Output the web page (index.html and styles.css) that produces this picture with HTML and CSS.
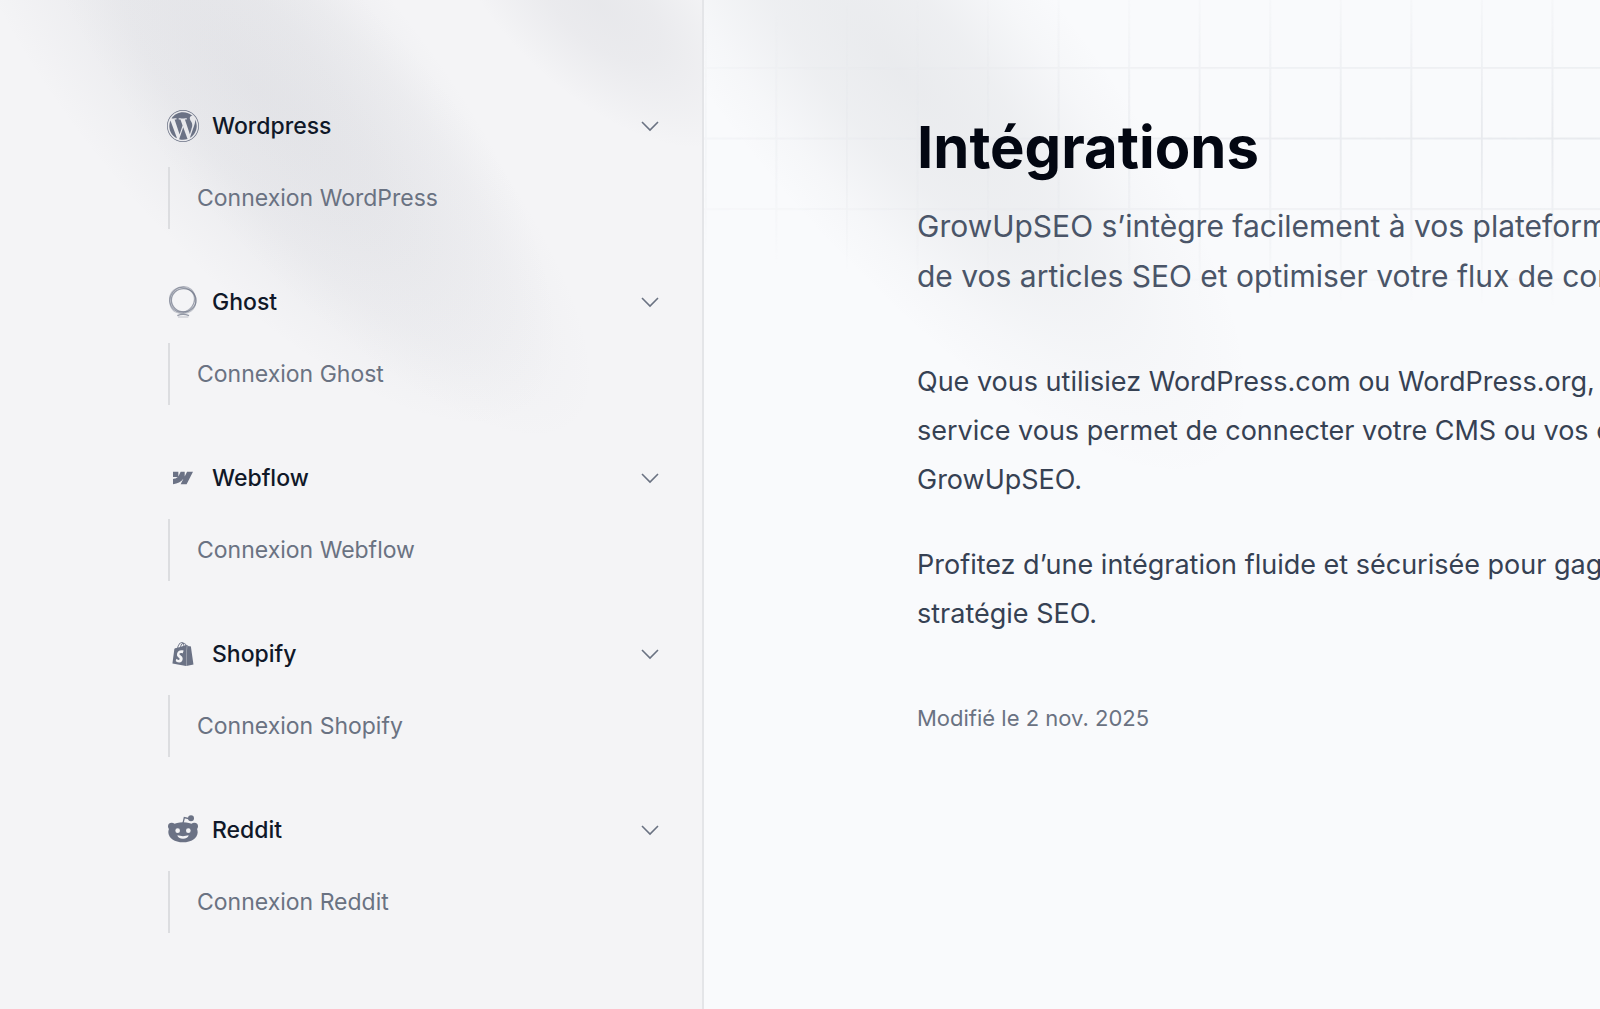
FILE: index.html
```html
<!DOCTYPE html>
<html lang="fr">
  <head>
    <meta charset="UTF-8" />
    <meta name="viewport" content="width=device-width, initial-scale=1.0" />
    <title>Intégrations - GrowUpSEO</title>
    <link rel="stylesheet" href="styles.css">
  </head>
  <body>
    <div class="layout">
      <aside class="sidebar">
        <!-- Halos du fond -->
        <svg class="backdrop" width="704" height="560" viewBox="0 0 704 560" aria-hidden="true">
          <defs>
            <radialGradient id="halo">
              <stop offset="0" stop-color="#6b7080" stop-opacity="0.09" />
              <stop offset="0.4" stop-color="#6b7080" stop-opacity="0.07" />
              <stop offset="0.75" stop-color="#6b7080" stop-opacity="0.03" />
              <stop offset="1" stop-color="#6b7080" stop-opacity="0" />
            </radialGradient>
            <radialGradient id="halo-soft">
              <stop offset="0" stop-color="#7c8090" stop-opacity="0.05" />
              <stop offset="0.7" stop-color="#7c8090" stop-opacity="0.03" />
              <stop offset="1" stop-color="#7c8090" stop-opacity="0" />
            </radialGradient>
          </defs>
          <ellipse cx="250" cy="85" rx="430" ry="165" transform="rotate(49 250 85)" fill="url(#halo)" />
          <ellipse cx="310" cy="130" rx="400" ry="130" transform="rotate(48 310 130)" fill="url(#halo-soft)" />
          <ellipse cx="600" cy="5" rx="190" ry="90" transform="rotate(42 600 5)" fill="url(#halo)" />
        </svg>

        <nav class="menu">
          <section class="menu-group">
            <button class="menu-title" type="button" aria-expanded="true">
              <span class="menu-icon">
                <svg width="32" height="32" viewBox="8 8 496 496" fill="currentColor" aria-hidden="true">
                  <path d="M61.7 169.4l101.5 278C92.2 413 43.3 340.2 43.3 256c0-30.9 6.6-60.1 18.4-86.6zm337.9 75.9c0-26.3-9.4-44.5-17.5-58.7-10.8-17.5-20.9-32.4-20.9-49.9 0-19.6 14.8-37.8 35.7-37.8.9 0 1.8.1 2.8.2-37.9-34.7-88.3-55.9-143.7-55.9-74.3 0-139.7 38.1-177.8 95.9 5 .2 9.7.3 13.7.3 22.2 0 56.7-2.7 56.7-2.7 11.5-.7 12.8 16.2 1.4 17.5 0 0-11.5 1.3-24.3 2l77.5 230.4L249.8 247l-33.1-90.8c-11.5-.7-22.3-2-22.3-2-11.5-.7-10.1-18.2 1.3-17.5 0 0 35.1 2.7 56 2.7 22.2 0 56.7-2.7 56.7-2.7 11.5-.7 12.8 16.2 1.4 17.5 0 0-11.5 1.3-24.3 2l76.9 228.7 21.2-70.9c9-29.4 16-50.5 16-68.7zm-139.9 29.3l-63.8 185.5c19.1 5.6 39.2 8.7 60.1 8.7 24.8 0 48.5-4.3 70.6-12.1-.6-.9-1.1-1.9-1.5-2.9l-65.4-179.2zm183-120.7c.9 6.8 1.4 14 1.4 21.9 0 21.6-4 45.8-16.2 76.2l-65 187.9C426.2 403 468.7 334.5 468.7 256c0-37-9.4-71.8-26-102.1zM504 256c0 136.8-111.3 248-248 248C119.2 504 8 392.7 8 256 8 119.2 119.2 8 256 8c136.7 0 248 111.2 248 248zm-11.4 0c0-130.5-106.2-236.6-236.6-236.6C125.5 19.4 19.4 125.5 19.4 256S125.6 492.6 256 492.6c130.5 0 236.6-106.1 236.6-236.6z" />
                </svg>
              </span>
              <span class="menu-label">Wordpress</span>
              <svg class="chevron" width="18" height="12" viewBox="0 0 18 12" aria-hidden="true"><path d="M1 2l8 8 8-8" /></svg>
            </button>
            <ul class="menu-list">
              <li><a href="#">Connexion WordPress</a></li>
            </ul>
          </section>

          <section class="menu-group">
            <button class="menu-title" type="button" aria-expanded="true">
              <span class="menu-icon">
                <svg width="32" height="32" viewBox="0 0 96 96" fill="none" stroke="currentColor" aria-hidden="true">
                  <ellipse cx="50" cy="43" rx="37" ry="35" stroke-width="4" stroke-opacity="0.7" />
                  <ellipse cx="46" cy="40" rx="40" ry="36" transform="rotate(-50 46 40)" stroke-width="3" stroke-opacity="0.5" />
                  <ellipse cx="47" cy="43" rx="41" ry="37" transform="rotate(40 47 43)" stroke-width="3" stroke-opacity="0.4" />
                  <ellipse cx="45" cy="43" rx="36" ry="40" transform="rotate(25 45 43)" stroke-width="3" stroke-opacity="0.4" />
                  <path d="M31 89c9-4 25-4 35 0" stroke-width="4" stroke-opacity="0.7" />
                  <path d="M33 93h31" stroke-width="2" stroke-opacity="0.6" />
                </svg>
              </span>
              <span class="menu-label">Ghost</span>
              <svg class="chevron" width="18" height="12" viewBox="0 0 18 12" aria-hidden="true"><path d="M1 2l8 8 8-8" /></svg>
            </button>
            <ul class="menu-list">
              <li><a href="#">Connexion Ghost</a></li>
            </ul>
          </section>

          <section class="menu-group">
            <button class="menu-title" type="button" aria-expanded="true">
              <span class="menu-icon">
                <svg width="20" height="20" viewBox="0 0 24 24" fill="currentColor" aria-hidden="true">
                  <path d="m24 4.515-7.658 14.97H9.149l3.205-6.204h-.144C9.566 16.713 5.621 18.973 0 19.485v-6.118s3.596-.213 5.71-2.435H0V4.515h6.417v5.278l.144-.001 2.622-5.277h4.854v5.244h.144l2.72-5.244H24Z" />
                </svg>
              </span>
              <span class="menu-label">Webflow</span>
              <svg class="chevron" width="18" height="12" viewBox="0 0 18 12" aria-hidden="true"><path d="M1 2l8 8 8-8" /></svg>
            </button>
            <ul class="menu-list">
              <li><a href="#">Connexion Webflow</a></li>
            </ul>
          </section>

          <section class="menu-group">
            <button class="menu-title" type="button" aria-expanded="true">
              <span class="menu-icon">
                <svg width="24" height="24" viewBox="0 0 24 24" fill="currentColor" aria-hidden="true">
                  <path d="M15.337 23.979l7.216-1.561s-2.604-17.613-2.625-17.73c-.018-.116-.114-.192-.211-.192s-1.929-.136-1.929-.136-1.275-1.274-1.439-1.411c-.045-.037-.075-.057-.121-.074l-.914 21.104h.023zM11.71 11.305s-.81-.424-1.774-.424c-1.447 0-1.504.906-1.504 1.141 0 1.232 3.24 1.715 3.24 4.629 0 2.295-1.44 3.76-3.406 3.76-2.354 0-3.54-1.465-3.54-1.465l.646-2.086s1.245 1.066 2.28 1.066c.675 0 .975-.545.975-.932 0-1.619-2.654-1.694-2.654-4.359-.034-2.237 1.571-4.416 4.827-4.416 1.257 0 1.875.361 1.875.361l-.945 2.715-.02.01zM11.17.83c.136 0 .271.038.405.135-.984.465-2.064 1.639-2.508 3.992-.656.213-1.293.405-1.889.578C7.697 3.75 8.951.84 11.17.84V.83zm1.235 2.949v.135c-.754.232-1.583.484-2.394.736.466-1.777 1.333-2.645 2.085-2.971.193.501.309 1.176.309 2.1zm.539-2.234c.694.074 1.141.867 1.429 1.755-.349.114-.735.231-1.158.366v-.252c0-.752-.096-1.371-.271-1.871v.002zm2.992 1.289c-.02 0-.06.021-.078.021s-.289.075-.714.21c-.423-1.233-1.176-2.37-2.508-2.37h-.115C12.135.209 11.669 0 11.265 0 8.159 0 6.675 3.877 6.21 5.846c-1.194.365-2.063.636-2.16.674-.675.213-.694.232-.772.87-.075.462-1.83 14.063-1.83 14.063L15.009 24l.927-21.166z" />
                </svg>
              </span>
              <span class="menu-label">Shopify</span>
              <svg class="chevron" width="18" height="12" viewBox="0 0 18 12" aria-hidden="true"><path d="M1 2l8 8 8-8" /></svg>
            </button>
            <ul class="menu-list">
              <li><a href="#">Connexion Shopify</a></li>
            </ul>
          </section>

          <section class="menu-group">
            <button class="menu-title" type="button" aria-expanded="true">
              <span class="menu-icon">
                <svg width="32" height="32" viewBox="0 0 96 96" fill="currentColor" aria-hidden="true">
                  <path d="M48 28l4-17 18 4" fill="none" stroke="currentColor" stroke-width="4" />
                  <circle cx="72" cy="13" r="9" />
                  <circle cx="14" cy="37" r="11" />
                  <circle cx="82" cy="37" r="11" />
                  <path d="M48 25c26 0 44 12 44 29 0 19-19 31-44 31S4 73 4 54c0-17 18-29 44-29z" />
                  <circle class="icon-hole" cx="32" cy="50" r="7" />
                  <circle class="icon-hole" cx="64" cy="50" r="7" />
                  <path class="icon-hole" d="M31 64q17 5 34 0c-1 7-8 10-17 10s-16-3-17-10z" />
                </svg>
              </span>
              <span class="menu-label">Reddit</span>
              <svg class="chevron" width="18" height="12" viewBox="0 0 18 12" aria-hidden="true"><path d="M1 2l8 8 8-8" /></svg>
            </button>
            <ul class="menu-list">
              <li><a href="#">Connexion Reddit</a></li>
            </ul>
          </section>
        </nav>
      </aside>

      <main class="content">
        <!-- Grille et halo derrière l'article -->
        <svg class="backdrop" width="896" height="560" viewBox="0 0 508 317.5" aria-hidden="true">
          <defs>
            <pattern id="grid" width="40" height="40" x="0.5" y="-2" patternUnits="userSpaceOnUse">
              <path d="M0.5 0v40M0 0.5h40" fill="none" stroke="#e6e8ec" />
            </pattern>
            <radialGradient id="grid-fade" gradientUnits="userSpaceOnUse" cx="0" cy="0" r="1" gradientTransform="translate(500 78) scale(700 96)">
              <stop offset="0" stop-color="#fff" />
              <stop offset="1" stop-color="#fff" stop-opacity="0" />
            </radialGradient>
            <mask id="grid-mask">
              <rect width="508" height="180" fill="url(#grid-fade)" />
            </mask>
            <radialGradient id="halo-main">
              <stop offset="0" stop-color="#6b7078" stop-opacity="0.11" />
              <stop offset="0.4" stop-color="#6b7078" stop-opacity="0.08" />
              <stop offset="0.75" stop-color="#6b7078" stop-opacity="0.025" />
              <stop offset="1" stop-color="#6b7078" stop-opacity="0" />
            </radialGradient>
          </defs>
          <ellipse cx="110" cy="40" rx="290" ry="95" transform="rotate(50 110 40)" fill="url(#halo-main)" />
          <rect width="508" height="180" fill="url(#grid)" mask="url(#grid-mask)" />
        </svg>

        <article class="article">
          <h1>Intégrations</h1>
          <p class="lead">
            GrowUpSEO s’intègre facilement à vos plateformes<br />
            de vos articles SEO et optimiser votre flux de contenu.
          </p>
          <div class="text">
            <p>
              Que vous utilisiez WordPress.com ou WordPress.org, notre<br />
              service vous permet de connecter votre CMS ou vos comptes à<br />
              GrowUpSEO.
            </p>
            <p>
              Profitez d’une intégration fluide et sécurisée pour gagner<br />
              stratégie SEO.
            </p>
          </div>
          <p class="date">Modifié le <time datetime="2025-11-02">2 nov. 2025</time></p>
        </article>
      </main>
    </div>
  </body>
</html>
```

FILE: styles.css
```css
/* Styles de base */
html,
body {
  margin: 0;
  padding: 0;
}

body {
  font-family: "Inter", "Liberation Sans", sans-serif;
  font-size: 22px;
  color: #101828;
  background-color: #f9fafc;
}

h1,
p,
ul {
  margin: 0;
  padding: 0;
}

.layout {
  display: grid;
  grid-template-columns: 44% 1fr;
  min-height: 100vh;
}

/* Décor placé derrière le contenu */
.backdrop {
  position: absolute;
  top: 0;
  left: 0;
  pointer-events: none;
}

/* Barre latérale */
.sidebar {
  position: relative;
  overflow: hidden;
  background-color: #f4f4f6;
  border-right: 2px solid #e4e5e8;
}

.menu {
  position: relative;
  display: flex;
  flex-direction: column;
  gap: 53px;
  padding: 106px 43px 40px 167px;
}

.menu-title {
  display: flex;
  align-items: center;
  gap: 13px;
  width: 100%;
  height: 40px;
  padding: 0;
  border: none;
  background: none;
  font-family: inherit;
  font-size: 23px;
  font-weight: 500;
  color: #101828;
  text-align: left;
  cursor: pointer;
}

.menu-icon {
  display: flex;
  align-items: center;
  justify-content: center;
  width: 32px;
  height: 32px;
  color: #6b7285;
}

.icon-hole {
  fill: #f4f4f6;
}

.menu-label {
  flex: 1;
}

.chevron {
  fill: none;
  stroke: #6a7282;
  stroke-width: 1.6;
}

.menu-list {
  list-style: none;
  margin: 21px 0 0 1px;
  border-left: 2px solid #dcdde0;
}

.menu-list a {
  display: block;
  padding-left: 27px;
  font-size: 23px;
  line-height: 62px;
  color: #6a7282;
  text-decoration: none;
}

.menu-list a:hover {
  color: #101828;
}

/* Contenu */
.content {
  position: relative;
  min-width: 0;
  overflow: hidden;
}

.article {
  position: relative;
  padding: 111px 0 60px 213px;
  white-space: nowrap;
}

.article h1 {
  font-size: 58px;
  font-weight: 700;
  line-height: 72px;
  color: #030712;
}

.lead {
  margin-top: 18px;
  font-size: 30px;
  line-height: 50px;
  color: #4a5568;
}

.text {
  display: flex;
  flex-direction: column;
  gap: 36px;
  margin-top: 56px;
  font-size: 27px;
  line-height: 49px;
  color: #364153;
}

.date {
  margin-top: 64px;
  line-height: 32px;
  color: #6a7282;
}
```
